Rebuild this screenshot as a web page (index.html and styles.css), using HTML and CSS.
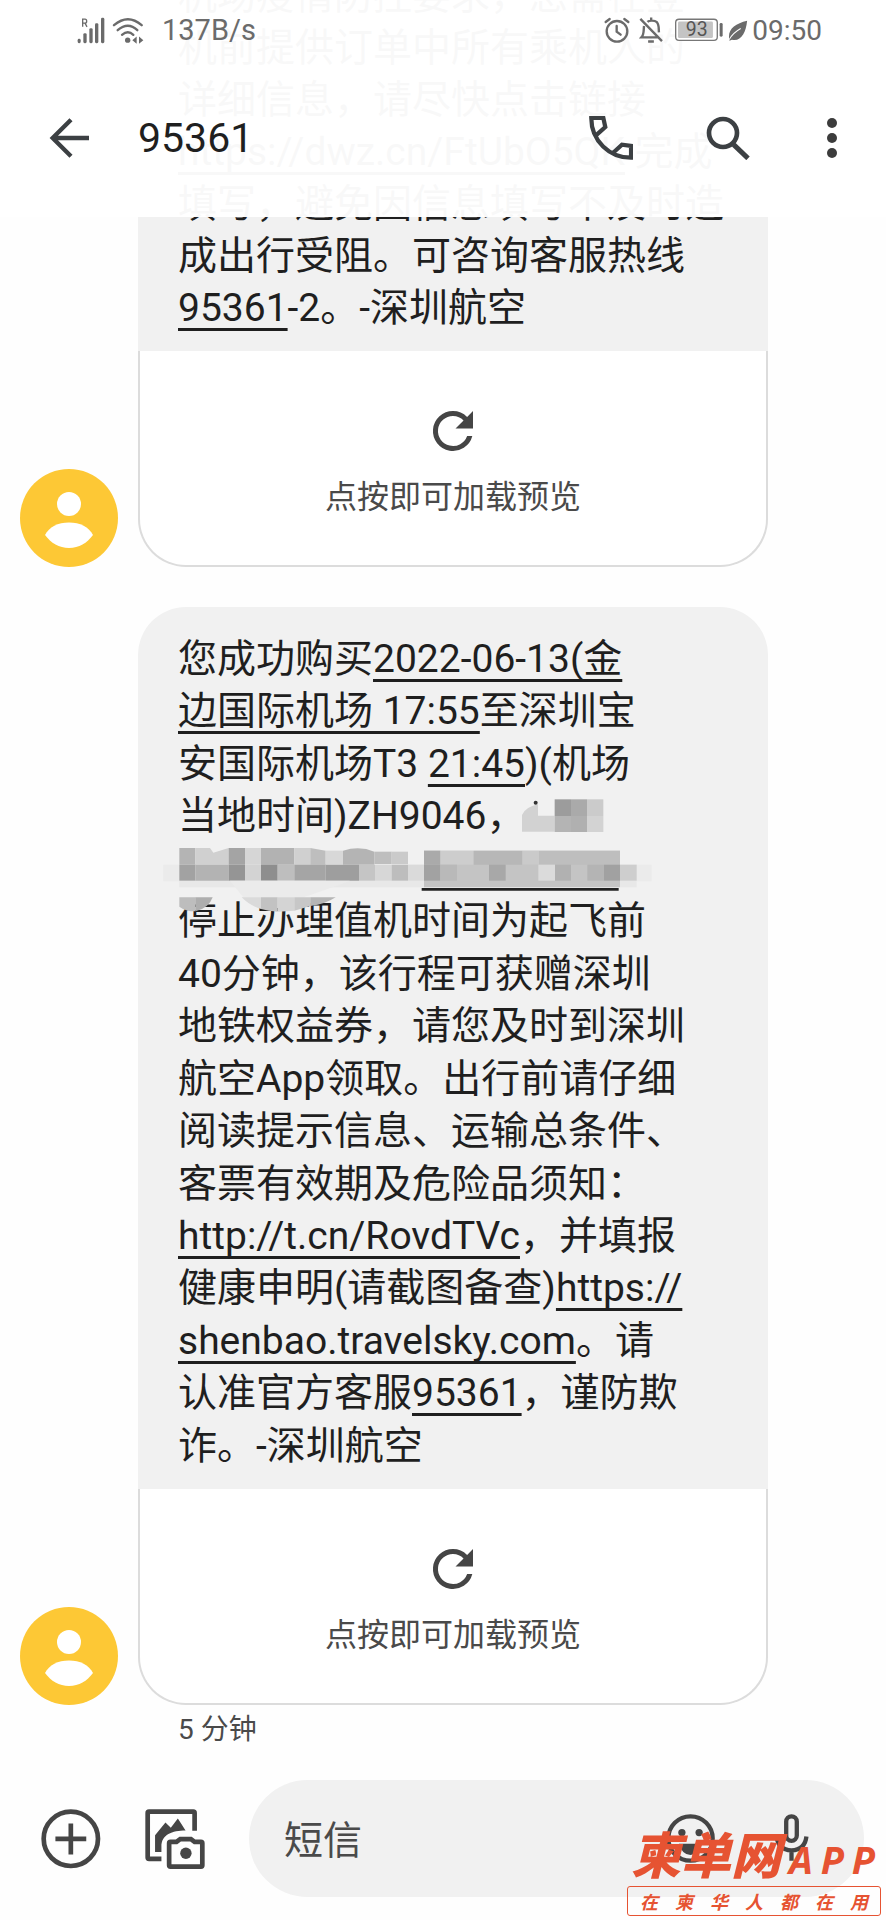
FILE: index.html
```html
<!DOCTYPE html>
<html lang="zh-CN">
<head>
<meta charset="utf-8">
<meta name="viewport" content="width=device-width, initial-scale=1">
<title>95361</title>
<link rel="stylesheet" href="styles.css">
</head>
<body>
<div class="screen">
  <header class="top">
    <div class="status">
      <svg class="signal" viewBox="231 48 84 80" aria-hidden="true">
        <g fill="#6b6b6b"><rect x="233" y="113" width="9" height="13" rx="4"/><rect x="250" y="96" width="10" height="30" rx="4"/><rect x="268" y="81" width="10" height="45" rx="4"/><rect x="285" y="66" width="10" height="60" rx="4"/><rect x="303" y="50" width="10" height="76" rx="4"/></g>
        <path d="M248 77V54h7q5 0 5 6t-5 6h-7m7 0 6 11" fill="none" stroke="#6b6b6b" stroke-width="4"/>
      </svg>
      <svg class="wifi" viewBox="334 48 96 80" aria-hidden="true">
        <g fill="none" stroke="#6b6b6b" stroke-width="7" stroke-linecap="round"><path d="M340 72Q382 36 423 72"/><path d="M351 87Q382 60 410 87"/><path d="M364 101Q382 86 398 101"/></g>
        <circle cx="381" cy="117" r="8" fill="#6b6b6b"/><path d="M408 106v22l-13-11zM415 106v22l13-11z" fill="#6b6b6b"/>
      </svg>
      <span class="rate">137B/s</span>
      <svg class="alarm" viewBox="486 50 78 76" aria-hidden="true">
        <g fill="none" stroke="#6b6b6b" stroke-width="7" stroke-linecap="round"><circle cx="525" cy="92" r="31"/><path d="M524 76v17l12 9M491 64l12-9M559 64l-12-9"/></g>
      </svg>
      <svg class="bell" viewBox="592 50 74 76" aria-hidden="true">
        <g fill="none" stroke="#6b6b6b" stroke-width="7"><path d="M596 55l64 66M607 76c-2 12 1 25-8 34h49M617 64c4-4 20-6 28 1 7 8 5 19 6 30M628 60v-9M619 122h17"/></g>
      </svg>
      <svg class="battery" viewBox="701 56 146 70" aria-hidden="true">
        <rect x="703" y="59" width="124" height="63" rx="10" fill="#fff" stroke="#777" stroke-width="4"/><rect x="710" y="66" width="104" height="49" rx="4" fill="#c4c4c4"/><rect x="834" y="70" width="9" height="41" rx="4" fill="#6b6b6b"/>
        <text class="charge" x="766" y="110" text-anchor="middle">93</text>
      </svg>
      <svg class="leaf" viewBox="860 56 58 62" aria-hidden="true">
        <path d="M916 58c-4 36-18 62-45 56l-7 3c-8-32 14-50 52-59z" fill="#6b6b6b"/><path d="M863 114c8-16 18-24 34-33" stroke="#fff" stroke-width="3" fill="none"/>
      </svg>
      <time>09:50</time>
    </div>
    <div class="toolbar">
      <button class="icon-btn" aria-label="返回">
        <svg class="back" viewBox="147 353 120 120"><path d="M267 413H160M213 358l-55 55 55 55" fill="none" stroke="#3c4043" stroke-width="13"/></svg>
      </button>
      <h1>95361</h1>
      <button class="icon-btn call" aria-label="拨打电话">
        <svg class="glyph" viewBox="435 346 135 135"><path d="M458 404l27-24-6-28h-37c0 70 56 122 122 122v-36l-28-4-26 24" fill="none" stroke="#3c4043" stroke-width="13"/></svg>
      </button>
      <button class="icon-btn search" aria-label="搜索">
        <svg class="glyph" viewBox="788 344 132 132"><circle cx="839" cy="395" r="42" fill="none" stroke="#3c4043" stroke-width="14"/><path d="M871 430l43 41" stroke="#3c4043" stroke-width="15"/></svg>
      </button>
      <button class="icon-btn" aria-label="更多">
        <svg class="glyph" viewBox="0 0 44 44"><g fill="#3c3c3c"><circle cx="22" cy="7" r="5"/><circle cx="22" cy="22" r="5"/><circle cx="22" cy="37" r="5"/></g></svg>
      </button>
    </div>
  </header>

  <main class="thread">
    <article class="message">
      <svg class="avatar" viewBox="0 0 98 98" aria-hidden="true"><circle cx="49" cy="49" r="49" fill="#fdc835"/><circle cx="49" cy="35" r="12" fill="#fff"/><path d="M25 66C29 58 38 53.500 49 53.500S69 58 73 66C67 74 59 79 49 79S31 74 25 66z" fill="#fff"/></svg>
      <div class="bubble">
        <div class="body clipped">
          <span>机场疫情防控要求，您需在登</span>
          <span>机前提供订单中所有乘机人的</span>
          <span>详细信息，请尽快点击链接</span>
          <span><a href="#">https://dwz.cn/FtUbO5QK</a> 完成</span>
          <span>填写，避免因信息填写不及时造</span>
          <span>成出行受阻。可咨询客服热线</span>
          <span><a href="#">95361</a>-2。-深圳航空</span>
        </div>
        <button class="preview">
          <svg class="reload" viewBox="0 0 24 24"><path d="M17.650 6.350A7.950 7.950 0 0 0 12 4a8 8 0 1 0 7.730 10h-2.080A6 6 0 1 1 12 6c1.660 0 3.140.690 4.220 1.780L13 11h7V4z" fill="#454545"/></svg>
          点按即可加载预览
        </button>
      </div>
    </article>

    <article class="message grow">
      <svg class="avatar" viewBox="0 0 98 98" aria-hidden="true"><circle cx="49" cy="49" r="49" fill="#fdc835"/><circle cx="49" cy="35" r="12" fill="#fff"/><path d="M25 66C29 58 38 53.500 49 53.500S69 58 73 66C67 74 59 79 49 79S31 74 25 66z" fill="#fff"/></svg>
      <div class="bubble">
        <div class="body">
          <span>您成功购买<a href="#">2022-06-13(金</a></span>
          <span><a href="#">边国际机场 17:55</a>至深圳宝</span>
          <span>安国际机场T3 <a href="#">21:45</a>)(机场</span>
          <span>当地时间)ZH9046，</span>
          <span>&nbsp;</span>
          <span>停止办理值机时间为起飞前</span>
          <span>40分钟，该行程可获赠深圳</span>
          <span>地铁权益券，请您及时到深圳</span>
          <span>航空App领取。出行前请仔细</span>
          <span>阅读提示信息、运输总条件、</span>
          <span>客票有效期及危险品须知：</span>
          <span><a href="#">http://t.cn/RovdTVc</a>，并填报</span>
          <span>健康申明(请截图备查)<a href="#">https://</a></span>
          <span><a href="#">shenbao.travelsky.com</a>。请</span>
          <span>认准官方客服<a href="#">95361</a>，谨防欺</span>
          <span>诈。-深圳航空</span>
        </div>
        <svg class="mosaic" viewBox="0 0 1530 420" aria-hidden="true">
          <path d="M1116 155v-50q10-24 48-32v34h50v48z" fill="#d2d2d2"/><circle cx="1157" cy="68" r="6" fill="#333"/>
          <path d="M1214 58h49v50h-49z" fill="#9c9c9c"/><path d="M1263 58h48v50h-48z" fill="#aaa"/><path d="M1311 58h49v50h-49z" fill="#cbcbcb"/>
          <path d="M1214 108h49v48h-49z" fill="#b4b4b4"/><path d="M1263 108h48v48h-48z" fill="#b0b0b0"/><path d="M1311 108h49v48h-49z" fill="#d3d3d3"/>
          <path d="M40 254h1465v50h-1465z" fill="#ebebeb"/><path d="M88 302h1372v20H88z" fill="#e8e8e8"/>
          <path d="M88 204h48v50H88z" fill="#b4b4b4"/><path d="M136 204h44l10 14 46-14v50H136z" fill="#d0d0d0"/><path d="M236 204h49v50h-49z" fill="#a4a4a4"/><path d="M285 204h48v50h-48z" fill="#d6d6d6"/><path d="M333 204h100v50H333z" fill="#b2b2b2"/><path d="M433 204h48v50h-48z" fill="#d0d0d0"/><path d="M481 204l46 8v42h-46z" fill="#bebebe"/><path d="M527 212h52v42h-52z" fill="#d8d8d8"/><path d="M579 212q50-16 94 3v39h-94z" fill="#b4b4b4"/><path d="M673 215h52v37h-52z" fill="#bebebe"/><path d="M725 215h49v37h-49z" fill="#cacaca"/>
          <path d="M88 254h48v48H88z" fill="#a2a2a2"/><path d="M136 254h100v48H136z" fill="#b3b3b3"/><path d="M236 254h49v48h-49z" fill="#959595"/><path d="M285 254h48v48h-48z" fill="#d3d3d3"/><path d="M333 254h50v48h-50z" fill="#8e8e8e"/><path d="M383 254h50v48h-50z" fill="#bebebe"/><path d="M433 254h94v48h-94z" fill="#a5a5a5"/><path d="M527 254h100v48H527z" fill="#9e9e9e"/><path d="M627 254h48v48h-48z" fill="#c5c5c5"/><path d="M675 254h50v48h-50z" fill="#d7d7d7"/><path d="M725 254h49v48h-49z" fill="#bdbdbd"/><path d="M774 254h48v48h-48z" fill="#dadada"/>
          <path d="M822 212h588v110H822z" fill="#c4c4c4"/><path d="M822 212h49v42h-49z" fill="#aaa"/><path d="M871 212h100v42H871z" fill="#cdcdcd"/><path d="M971 212h146v42H971z" fill="#b7b7b7"/><path d="M1117 212h50v42h-50z" fill="#cacaca"/><path d="M1167 212h243v42h-243z" fill="#bebebe"/>
          <path d="M822 254h49v48h-49z" fill="#a2a2a2"/><path d="M871 254h50v48h-50z" fill="#b9b9b9"/><path d="M1017 254h50v48h-50z" fill="#a8a8a8"/><path d="M1165 254h50v48h-50z" fill="#dbdbdb"/><path d="M1215 254h48v48h-48z" fill="#b1b1b1"/><path d="M1312 254h50v48h-50z" fill="#b4b4b4"/><path d="M1362 254h48v48h-48z" fill="#a1a1a1"/><path d="M1410 254h50v48h-50z" fill="#cecece"/>
          <path d="M815 324h591v8H815z" fill="#222"/>
          <path d="M240 302h360q-80 30-140 50H280z" fill="#ebebeb"/>
          <path d="M88 352h48v42q-30 0-48-14z" fill="#bdbdbd"/><path d="M136 352h52q-12 34-52 42z" fill="#aeaeae"/>
          <path d="M275 352h58v35q-34-10-58-35z" fill="#dadada"/><path d="M333 352h50v43q-28-1-50-8z" fill="#c2c2c2"/><path d="M383 352h50v40l-50 3z" fill="#d4d4d4"/><path d="M433 352h48v26l-48 14z" fill="#c7c7c7"/><path d="M481 352h76q-30 20-76 26z" fill="#b5b5b5"/>
        </svg>
        <button class="preview">
          <svg class="reload" viewBox="0 0 24 24"><path d="M17.650 6.350A7.950 7.950 0 0 0 12 4a8 8 0 1 0 7.730 10h-2.080A6 6 0 1 1 12 6c1.660 0 3.140.690 4.220 1.780L13 11h7V4z" fill="#454545"/></svg>
          点按即可加载预览
        </button>
      </div>
    </article>
    <p class="stamp">5 分钟</p>
  </main>

  <footer class="composer">
    <button class="icon-btn add" aria-label="添加">
      <svg viewBox="125 214 179 179"><circle cx="214" cy="303" r="81" fill="none" stroke="#454545" stroke-width="14"/><path d="M168 303h92M214 257v93" stroke="#454545" stroke-width="14"/></svg>
    </button>
    <button class="icon-btn photo" aria-label="照片">
      <svg viewBox="435 214 179 179"><g fill="none" stroke="#454545" stroke-width="14"><path d="M484 363h-37q-4 0-4-4V226q0-4 4-4h132q4 0 4 4v53"/><path d="M507 382v-66q0-4 4-4h18l11-8h32l11 8h19q4 0 4 4v66q0 4-4 4h-91q-4 0-4-4z"/></g><circle cx="557" cy="346" r="17" fill="#454545"/><path d="M465 342v-50l31-38 16 16 21-28 23 36c-40 0-72 12-72 48v16z" fill="#454545"/></svg>
    </button>
    <div class="field">
      <input type="text" placeholder="短信" aria-label="短信">
      <button class="icon-btn emoji" aria-label="表情">
        <svg viewBox="671 222 148 148"><circle cx="745" cy="296" r="67" fill="none" stroke="#454545" stroke-width="13"/><circle cx="719" cy="278" r="11" fill="#454545"/><circle cx="771" cy="278" r="11" fill="#454545"/><path d="M710 312h70q-10 34-35 34t-35-34z" fill="#454545"/></svg>
      </button>
      <button class="icon-btn mic" aria-label="语音">
        <svg viewBox="975 222 148 148"><rect x="1033" y="229" width="32" height="74" rx="16" fill="none" stroke="#454545" stroke-width="13"/><path d="M1004 290q4 40 45 42 41-2 45-42M1049 330v33" fill="none" stroke="#454545" stroke-width="13"/></svg>
      </button>
    </div>
  </footer>

  <div class="watermark">
    <div class="brand"><span>柬单网</span><b>A</b><b>P</b><b>P</b></div>
    <div class="slogan"><span>在</span><span>柬</span><span>华</span><span>人</span><span>都</span><span>在</span><span>用</span></div>
  </div>
</div>
</body>
</html>
```
FILE: styles.css
```css
* { box-sizing: border-box; }

body {
  margin: 0;
  background: #fefefe;
  color: #1f1f1f;
  font-family: Roboto, "Noto Sans CJK SC", sans-serif;
}

button {
  font: inherit;
  color: inherit;
  background: none;
  border: 0;
  padding: 0;
}

svg { display: block; }

.screen {
  position: relative;
  display: flex;
  flex-direction: column;
  min-height: 100vh;
  overflow: hidden;
}

.top {
  position: absolute;
  top: 0;
  left: 0;
  right: 0;
  z-index: 2;
  height: 217px;
  background: rgba(255, 255, 255, .97);
}

.status {
  display: flex;
  align-items: center;
  height: 60px;
  padding: 0 64px 0 77px;
  color: #6b6b6b;
  font-size: 28px;
}
.signal { width: 28px; height: 27px; }
.wifi { width: 32px; height: 27px; margin-left: 7px; }
.rate { margin: 0 auto 0 18px; font-size: 29px; }
.alarm { width: 26px; height: 26px; margin-right: 9px; }
.bell { width: 25px; height: 26px; margin-right: 11px; }
.battery { width: 49px; height: 24px; margin-right: 4px; }
.charge { font-size: 58px; fill: #555; }
.leaf { width: 20px; height: 21px; margin-right: 4px; }

.toolbar {
  display: flex;
  align-items: center;
  height: 156px;
  padding: 0 24px 0 39px;
}
.icon-btn {
  display: flex;
  flex: none;
  align-items: center;
  justify-content: center;
  width: 60px;
  height: 60px;
}
.back { width: 40px; height: 40px; }
.glyph { width: 44px; height: 44px; }
h1 {
  flex: 1;
  margin: 0 0 0 39px;
  font-size: 41px;
  font-weight: 400;
}
.call { margin-right: 57px; }
.search { margin-right: 44px; }

.thread {
  display: flex;
  flex: 1;
  flex-direction: column;
  margin-top: -31px;
}
.message {
  display: flex;
  align-items: flex-end;
  gap: 20px;
  margin-bottom: 40px;
  padding: 0 118px 0 20px;
}
.grow {
  flex: 1;
  align-items: stretch;
  margin-bottom: 0;
}
.avatar {
  flex: none;
  align-self: flex-end;
  width: 98px;
  height: 98px;
}
.bubble {
  position: relative;
  display: flex;
  flex: 1;
  flex-direction: column;
  min-width: 0;
}
.body {
  display: flex;
  flex: 1;
  flex-direction: column;
  justify-content: space-between;
  padding: 26px 40px 17px;
  border-radius: 48px 48px 0 0;
  background: #f1f1f1;
  font-size: 39px;
  line-height: 52px;
}
.clipped { padding-top: 1px; border-radius: 0; }
.body span { white-space: nowrap; }
.body a {
  color: inherit;
  text-decoration: underline;
  text-decoration-thickness: 3px;
  text-underline-offset: 7px;
  text-decoration-skip-ink: none;
}
.mosaic {
  position: absolute;
  top: 173px;
  left: 12px;
  width: 510px;
  height: 140px;
}
.preview {
  display: flex;
  flex-direction: column;
  align-items: center;
  height: 216px;
  padding-top: 50px;
  border: 2px solid #dcdcdc;
  border-top: 0;
  border-radius: 0 0 48px 48px;
  background: #fff;
  color: #4a4a4a;
  font-size: 32px;
  line-height: 40px;
  gap: 16px;
}
.reload { width: 60px; height: 60px; }
.stamp {
  margin: 5px 0 0 178px;
  color: #4a4a4a;
  font-size: 28px;
  line-height: 40px;
}

.composer {
  display: flex;
  align-items: center;
  padding: 30px 22px 23px 41px;
}
.composer .icon-btn svg { width: 100%; }
.photo { margin-left: 44px; }
.field {
  display: flex;
  flex: 1;
  align-items: center;
  min-width: 0;
  height: 117px;
  margin-left: 44px;
  padding: 0 48px 0 35px;
  border-radius: 59px;
  background: #f1f1f1;
}
.field input {
  flex: 1;
  min-width: 0;
  height: 64px;
  padding: 4px 0 0;
  border: 0;
  outline: 0;
  background: none;
  font: inherit;
  font-size: 39px;
}
.field input::placeholder { color: #4a4a4a; opacity: 1; }
.emoji, .mic { width: 49px; height: 49px; }
.mic { margin-left: 52px; }

.watermark {
  position: absolute;
  right: 5px;
  bottom: 4px;
  z-index: 3;
  width: 254px;
  color: #e65332;
  font-family: "Noto Sans CJK SC", sans-serif;
  font-style: italic;
}
.brand {
  display: flex;
  align-items: baseline;
  justify-content: space-between;
  padding: 0 6px 0 4px;
  font-size: 50px;
  font-weight: 900;
  line-height: 54px;
}
.brand b { font-family: "Open Sans", sans-serif; font-size: 38px; font-weight: 700; }
.slogan {
  display: flex;
  justify-content: space-between;
  padding: 0 12px;
  border: 1px solid #e65332;
  border-radius: 3px;
  font-size: 18px;
  font-weight: 700;
  line-height: 28px;
}
```
